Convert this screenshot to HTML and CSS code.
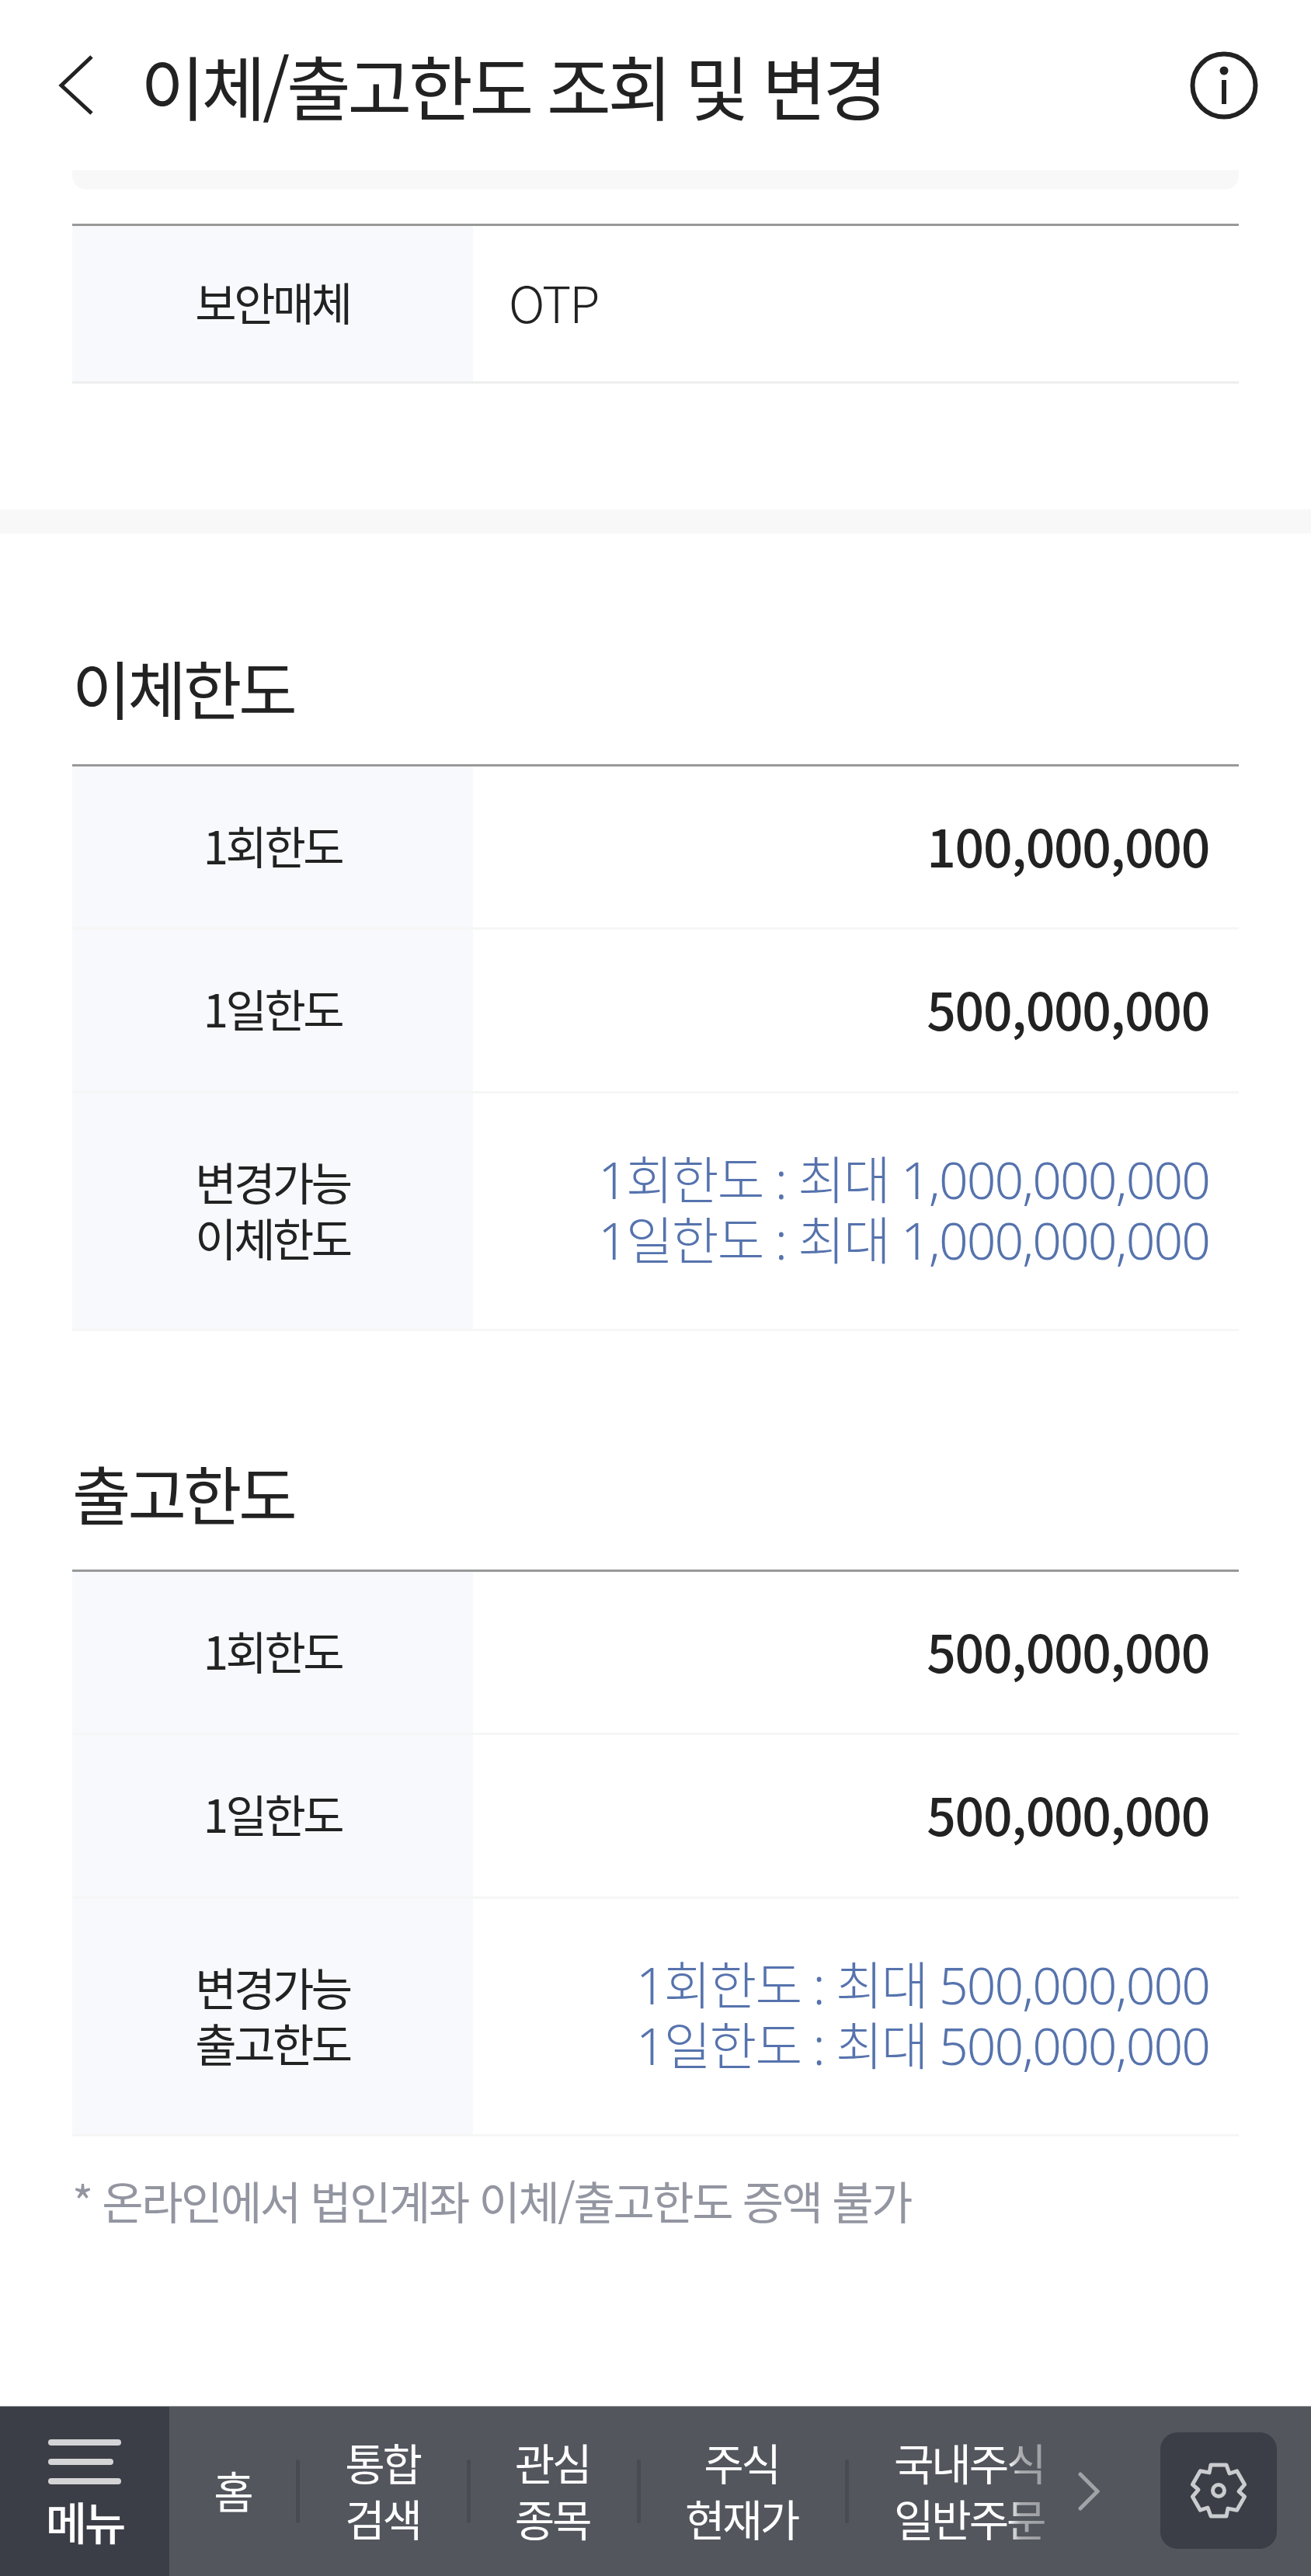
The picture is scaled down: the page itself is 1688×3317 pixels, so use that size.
FILE: index.html
```html
<!DOCTYPE html>
<html lang="ko">
<head>
  <meta charset="UTF-8" />
  <meta name="viewport" content="width=device-width, initial-scale=1.0" />
  <title>이체/출고한도 조회 및 변경</title>
  <link rel="stylesheet" href="styles.css">
</head>
<body>
  <div class="page">
    <header class="top-bar">
      <svg class="back-icon" viewBox="0 0 54 84"><path d="M48 5 L9 42 L48 78" /></svg>
      <h1>이체/출고한도 조회 및 변경</h1>
      <svg class="info-icon" viewBox="0 0 88 88">
        <circle cx="44" cy="44" r="40.5" />
        <path d="M44 37 V68" />
        <circle class="dot" cx="44" cy="25" r="5.5" />
      </svg>
    </header>

    <div class="content">
      <div class="strip"></div>
      <div class="table">
        <div class="row row-otp">
          <div class="th">보안매체</div>
          <div class="td td-left">OTP</div>
        </div>
      </div>
      <div class="band"></div>

      <section class="limit-section">
        <h2>이체한도</h2>
        <div class="table">
          <div class="row row-a">
            <div class="th">1회한도</div>
            <div class="td amount">100,000,000</div>
          </div>
          <div class="row row-b">
            <div class="th">1일한도</div>
            <div class="td amount">500,000,000</div>
          </div>
          <div class="row row-c">
            <div class="th">변경가능<br>이체한도</div>
            <div class="td max">1회한도 : 최대 1,000,000,000<br>1일한도 : 최대 1,000,000,000</div>
          </div>
        </div>
      </section>

      <section class="limit-section second">
        <h2>출고한도</h2>
        <div class="table">
          <div class="row row-a">
            <div class="th">1회한도</div>
            <div class="td amount">500,000,000</div>
          </div>
          <div class="row row-b">
            <div class="th">1일한도</div>
            <div class="td amount">500,000,000</div>
          </div>
          <div class="row row-c">
            <div class="th">변경가능<br>출고한도</div>
            <div class="td max">1회한도 : 최대 500,000,000<br>1일한도 : 최대 500,000,000</div>
          </div>
        </div>
        <p class="note">* 온라인에서 법인계좌 이체/출고한도 증액 불가</p>
      </section>
    </div>

    <nav class="bottom-bar">
      <div class="menu-btn">
        <div class="burger">
          <span></span>
          <span class="short"></span>
          <span></span>
        </div>
        <div class="menu-label">메뉴</div>
      </div>
      <div class="quick">
        <div class="quick-item home">홈</div>
        <div class="sep"></div>
        <div class="quick-item search">통합<br>검색</div>
        <div class="sep"></div>
        <div class="quick-item watch">관심<br>종목</div>
        <div class="sep"></div>
        <div class="quick-item price">주식<br>현재가</div>
        <div class="sep"></div>
        <div class="quick-item order">국내주식<br>일반주문</div>
        <svg class="next-icon" viewBox="0 0 28 50"><path d="M3 3 L25 25 L3 47" /></svg>
      </div>
      <div class="setting-btn">
        <svg viewBox="-40 -40 80 80">
          <path d="M-10 -33 L10 -33 L14 -22 L23.6 -25.2 L33.6 -7.8 L26 1.1 L33.6 7.8 L23.6 25.2 L12 23.1 L10 33 L-10 33 L-14 22 L-23.6 25.2 L-33.6 7.8 L-26 -1.1 L-33.6 -7.8 L-23.6 -25.2 L-12 -23.1 Z" />
          <circle cx="0" cy="0" r="7.5" />
        </svg>
      </div>
    </nav>
  </div>
</body>
</html>
```
FILE: styles.css
```css
* {
  box-sizing: border-box;
}
html, body {
  margin: 0;
  padding: 0;
}
body {
  font-family: "Noto Sans CJK KR", "Noto Sans", sans-serif;
  background-color: #fff;
  color: #222;
}
.page {
  width: 1688px;
  height: 3317px;
  display: flex;
  flex-direction: column;
  overflow: hidden;
}
.top-bar {
  height: 219px;
  flex: none;
  display: flex;
  align-items: flex-start;
  padding: 66px 68px 0 70px;
}
.back-icon {
  width: 54px;
  height: 84px;
  margin-top: 2px;
  fill: none;
  stroke: #222;
  stroke-width: 5;
}
.top-bar h1 {
  margin: -2px 0 0 57px;
  font-size: 90px;
  font-weight: 400;
  line-height: 90px;
  letter-spacing: -4.3px;
  flex: 1;
  white-space: nowrap;
}
.info-icon {
  width: 88px;
  height: 88px;
  fill: none;
  stroke: #222;
  stroke-width: 6;
}
.info-icon .dot {
  fill: #222;
  stroke: none;
}
.content {
  flex: 1;
}
.strip {
  height: 25px;
  margin: 0 93px 44px;
  background-color: #f8f8f8;
  border-radius: 0 0 18px 18px;
}
.table {
  margin: 0 93px;
  border-top: 3px solid #999;
}
.row {
  display: flex;
  border-bottom: 3px solid #f6f6f6;
}
.row-otp {
  height: 203px;
  border-bottom-color: #eee;
}
.row-a {
  height: 210px;
}
.row-b {
  height: 211px;
}
.row-c {
  height: 306px;
}
.th {
  width: 516px;
  flex: none;
  background-color: #f8f9fd;
  display: flex;
  align-items: center;
  justify-content: center;
  text-align: center;
  padding-bottom: 6px;
  font-size: 58px;
  line-height: 72px;
  letter-spacing: -3.5px;
  color: #222;
}
.td {
  flex: 1;
  display: flex;
  align-items: center;
  padding: 0 38px 6px 46px;
}
.td-left {
  font-weight: 300;
  font-size: 64px;
  letter-spacing: -2px;
}
.amount {
  justify-content: flex-end;
  font-weight: 500;
  font-size: 66px;
  letter-spacing: -1.3px;
}
.max {
  justify-content: flex-end;
  text-align: right;
  font-family: "Noto Sans", "Noto Sans CJK KR", sans-serif;
  font-weight: 300;
  font-size: 66px;
  line-height: 78px;
  letter-spacing: -1.9px;
  color: #5673ad;
}
.band {
  height: 31px;
  margin-top: 162px;
  background-color: #f8f8f8;
}
.limit-section {
  padding-top: 148px;
}
.limit-section h2 {
  margin: 0 93px 49px;
  font-size: 82px;
  font-weight: 400;
  line-height: 100px;
  letter-spacing: -4px;
}
.second {
  padding-top: 158px;
}
.note {
  margin: 46px 93px 0;
  font-size: 58px;
  line-height: 72px;
  letter-spacing: -2.5px;
  color: #9396a1;
}
.bottom-bar {
  height: 219px;
  flex: none;
  display: flex;
  background-color: #53565d;
  border-top: 1px solid #999;
  color: #fff;
}
.menu-btn {
  width: 218px;
  flex: none;
  background-color: #3b3e46;
  padding-top: 42px;
}
.burger {
  width: 94px;
  margin-left: 62px;
}
.burger span {
  display: block;
  height: 8px;
  border-radius: 4px;
  background-color: #d4d4d6;
  margin-bottom: 17px;
}
.burger span.short {
  width: 84px;
}
.menu-label {
  font-size: 58px;
  font-weight: 500;
  line-height: 60px;
  text-align: center;
  letter-spacing: -3px;
  margin-top: 7px;
}
.quick {
  flex: 1;
  display: flex;
  align-items: center;
  font-size: 56px;
  line-height: 72px;
  letter-spacing: -3.2px;
  text-align: center;
}
.quick-item {
  flex: none;
  white-space: nowrap;
  margin-bottom: 4px;
}
.sep {
  width: 5px;
  height: 82px;
  flex: none;
  background-color: #484b52;
  border-radius: 3px;
}
.home {
  width: 163px;
}
.search {
  width: 213px;
  margin-right: 2px;
}
.watch {
  width: 210px;
  margin-right: 4px;
}
.price {
  width: 259px;
  margin-right: 4px;
}
.order {
  width: 204px;
  margin-left: 58px;
  text-align: left;
  -webkit-mask-image: linear-gradient(to right, #000 72%, rgba(0,0,0,.5) 80%, rgba(0,0,0,.4) 100%);
  mask-image: linear-gradient(to right, #000 72%, rgba(0,0,0,.5) 80%, rgba(0,0,0,.4) 100%);
}
.next-icon {
  width: 28px;
  height: 50px;
  margin-left: 33px;
  fill: none;
  stroke: #a2a3a7;
  stroke-width: 5;
  stroke-linecap: round;
}
.setting-btn {
  width: 150px;
  height: 150px;
  flex: none;
  margin: 33px 44px 0 0;
  background-color: #3b3e46;
  border-radius: 22px;
  display: flex;
  align-items: center;
  justify-content: center;
}
.setting-btn svg {
  width: 80px;
  height: 80px;
  fill: none;
  stroke: #cbcccf;
  stroke-width: 5;
  stroke-linejoin: round;
}
```
